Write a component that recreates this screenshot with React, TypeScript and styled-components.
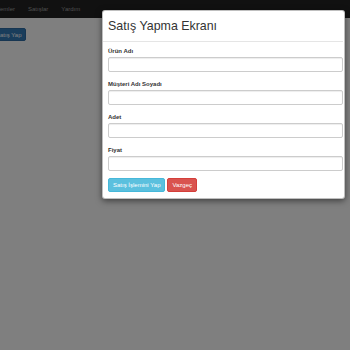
import React from 'react'
import styled, { createGlobalStyle } from 'styled-components'

const GlobalStyle = createGlobalStyle`
    html, body {
        margin: 0;
        padding: 0;
        background: #ffffff;
        font-family: "Liberation Sans", Arial, sans-serif;
    }
    body {
        width: 350px;
        height: 350px;
        overflow: hidden;
    }
`

const Page = styled.div`
    position: relative;
    width: 350px;
    height: 350px;
    overflow: hidden;
`

const Navbar = styled.div`
    height: 18px;
    background: #222222;
    display: flex;
    align-items: center;
    gap: 13px;
    margin-left: -6px;
`

const NavItem = styled.span`
    font-size: 6px;
    color: #9d9d9d;
`

const Content = styled.div`
    display: flex;
    padding: 10px 0 0 0;
    margin-left: -9px;
`

const PrimaryButton = styled.button`
    font-family: inherit;
    font-size: 6px;
    color: #ffffff;
    background: #337ab7;
    border: 1px solid #2e6da4;
    border-radius: 2px;
    height: 13px;
    padding: 0 4px;
`

const Backdrop = styled.div`
    position: absolute;
    inset: 0;
    background: rgba(0, 0, 0, 0.5);
`

const Modal = styled.div`
    position: absolute;
    left: 102px;
    top: 10px;
    width: 243px;
    height: 189px;
    box-sizing: border-box;
    background: #ffffff;
    border: 1px solid rgba(0, 0, 0, 0.25);
    border-radius: 3px;
    box-shadow: 0 2px 6px rgba(0, 0, 0, 0.5);
`

const Header = styled.div`
    height: 30px;
    margin-right: 1px;
    padding: 0 5px;
    border-bottom: 1px solid #e5e5e5;
    display: flex;
    align-items: center;
`

const Title = styled.h4`
    margin: 0;
    font-weight: normal;
    font-size: 12.4px;
    color: #333333;
`

const Body = styled.div`
    padding: 5px 1px 0 5px;
`

const Group = styled.div`
    margin-bottom: 8px;
`

const Label = styled.label`
    display: block;
    font-size: 6px;
    line-height: 8px;
    font-weight: bold;
    color: #333333;
    margin-bottom: 2px;
`

const Input = styled.input`
    display: block;
    box-sizing: border-box;
    width: 100%;
    height: 15px;
    border: 1px solid #cccccc;
    border-radius: 2px;
    box-shadow: inset 0 1px 1px rgba(0, 0, 0, 0.075);
    padding: 0 4px;
    font-size: 6px;
`

const Actions = styled.div`
    display: flex;
    gap: 2px;
    margin-top: -1px;
`

const ActionButton = styled.button<{ $variant: 'info' | 'danger' }>`
    font-family: inherit;
    font-size: 6px;
    color: #ffffff;
    height: 14px;
    padding: 0 4px;
    border-radius: 2px;
    background: ${p => (p.$variant === 'info' ? '#5bc0de' : '#d9534f')};
    border: 1px solid ${p => (p.$variant === 'info' ? '#46b8da' : '#d43f3a')};
`

const fields = ['Ürün Adı', 'Müşteri Adı Soyadı', 'Adet', 'Fiyat']

export default function App() {
    return (
        <Page>
            <GlobalStyle />
            <Navbar>
                <NavItem>İşlemler</NavItem>
                <NavItem>Satışlar</NavItem>
                <NavItem>Yardım</NavItem>
            </Navbar>
            <Content>
                <PrimaryButton>Satış Yap</PrimaryButton>
            </Content>
            <Backdrop />
            <Modal>
                <Header>
                    <Title>Satış Yapma Ekranı</Title>
                </Header>
                <Body>
                    {fields.map((f, key) => (
                        <Group key={key}>
                            <Label>{f}</Label>
                            <Input />
                        </Group>
                    ))}
                    <Actions>
                        <ActionButton $variant="info">Satış İşlemini Yap</ActionButton>
                        <ActionButton $variant="danger">Vazgeç</ActionButton>
                    </Actions>
                </Body>
            </Modal>
        </Page>
    )
}
